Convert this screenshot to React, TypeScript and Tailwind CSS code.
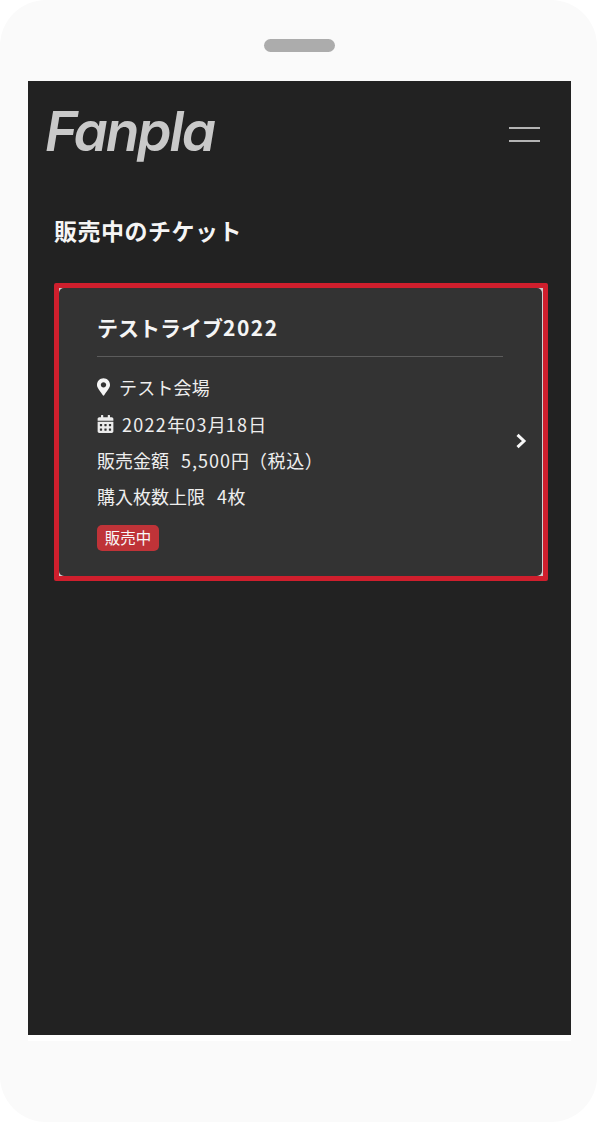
const jp = "font-['Noto_Sans_CJK_JP','Noto_Sans',sans-serif]";

function Pin() {
  return (
    <svg width="13" height="18" viewBox="0 0 384 512" fill="#f5f5f5" className="shrink-0">
      <path d="M172.3 501.7C27 291 0 269.4 0 192 0 86 86 0 192 0s192 86 192 192c0 77.4-27 99-172.3 309.7-9.500 13.800-29.900 13.800-39.400 0zM192 272c44.200 0 80-35.800 80-80s-35.800-80-80-80-80 35.800-80 80 35.800 80 80 80z" />
    </svg>
  );
}

function Calendar() {
  return (
    <svg width="17" height="18" viewBox="0 0 448 512" fill="#ececec" className="shrink-0">
      <path d="M0 464c0 26.500 21.500 48 48 48h352c26.500 0 48-21.500 48-48V192H0v272zm320-196c0-6.600 5.400-12 12-12h40c6.600 0 12 5.400 12 12v40c0 6.600-5.400 12-12 12h-40c-6.600 0-12-5.400-12-12v-40zm0 128c0-6.600 5.400-12 12-12h40c6.600 0 12 5.400 12 12v40c0 6.600-5.400 12-12 12h-40c-6.600 0-12-5.400-12-12v-40zM192 268c0-6.600 5.400-12 12-12h40c6.600 0 12 5.400 12 12v40c0 6.600-5.400 12-12 12h-40c-6.600 0-12-5.400-12-12v-40zm0 128c0-6.600 5.400-12 12-12h40c6.600 0 12 5.400 12 12v40c0 6.600-5.400 12-12 12h-40c-6.600 0-12-5.400-12-12v-40zM64 268c0-6.600 5.400-12 12-12h40c6.600 0 12 5.400 12 12v40c0 6.600-5.400 12-12 12H76c-6.600 0-12-5.400-12-12v-40zm0 128c0-6.600 5.400-12 12-12h40c6.600 0 12 5.400 12 12v40c0 6.600-5.400 12-12 12H76c-6.600 0-12-5.400-12-12v-40zM400 64h-48V16c0-8.800-7.200-16-16-16h-32c-8.800 0-16 7.200-16 16v48H160V16c0-8.800-7.200-16-16-16h-32c-8.800 0-16 7.200-16 16v48H48C21.500 64 0 85.500 0 112v48h448v-48c0-26.500-21.500-48-48-48z" />
    </svg>
  );
}

function Chevron() {
  return (
    <svg width="12" height="16" viewBox="0 0 12 16" fill="none" stroke="#f8f8f8" strokeWidth="3" className="shrink-0">
      <path d="M2.500 1.800 L9 8 L2.500 14.200" />
    </svg>
  );
}

export default function App() {
  return (
    <div className={`h-[1125px] w-[599px] bg-white ${jp}`}>
      <div className="flex h-[1122px] w-[597px] flex-col rounded-[46px] bg-[#fafafa] pl-[28px] pt-[39px]">
        <div className="ml-[236px] h-[13px] w-[71px] rounded-[7px] bg-[#acacac]" />
        <main className="mt-[29px] flex h-[954px] w-[543px] flex-col bg-[#222222] pl-[26px] pr-[23px]">
          <header className="flex h-[99px] items-start justify-between">
            <span className="ml-[-9px] mt-[15px] font-['Inter',sans-serif] text-[55px] font-semibold italic leading-[70px] tracking-[-2.100px] text-[#c9c9c9]">
              Fanpla
            </span>
            <div className="mr-[8px] mt-[46px] flex w-[31px] flex-col gap-[11px]">
              <div className="h-[2px] bg-[#b4b4b4]" />
              <div className="h-[2px] bg-[#b4b4b4]" />
            </div>
          </header>
          <h1 className="mt-[33px] text-[23px] font-bold leading-[34px] tracking-[0.500px] text-[#f5f5f5]">販売中のチケット</h1>
          <section className="mt-[36px] h-[298px] w-[494px] rounded-[2px] border-[5px] border-[#cf1f2d] bg-[#cfcfcf]">
            <div className="flex h-[288px] w-[483px] items-start rounded-[5px] bg-[#333333] pl-[38px]">
              <div className="w-[406px] shrink-0 pt-[23px]">
                <h2 className="border-b border-[#5c5c5c] pb-[12px] text-[21px] font-bold leading-[33px] text-[#f5f5f5]">
                  テストライブ<span className="tracking-[1.500px]">2022</span>
                </h2>
                <div className="mt-[11px] flex h-[38px] items-center gap-[9px] text-[18px] text-[#eeeeee]">
                  <Pin />
                  <span className="tracking-[0.200px]">テスト会場</span>
                </div>
                <div className="flex h-[36px] items-center gap-[8px] text-[18px] text-[#eeeeee]">
                  <Calendar />
                  <span>
                    <span className="tracking-[1.300px]">2022</span>年<span className="tracking-[1.300px]">03</span>月<span className="tracking-[1.300px]">18</span>日
                  </span>
                </div>
                <div className="flex h-[36px] items-center text-[18px] text-[#eeeeee]">
                  <span>販売金額</span>
                  <span className="ml-[12px]">
                    <span className="tracking-[1px]">5,500</span>円<span className="tracking-[0.600px]">（税込）</span>
                  </span>
                </div>
                <div className="flex h-[37px] items-center text-[18px] text-[#eeeeee]">
                  <span>購入枚数上限</span>
                  <span className="ml-[12px] tracking-[0.500px]">4枚</span>
                </div>
                <div className="mt-[10px] flex h-[26px] w-[62px] items-center justify-center rounded-[5px] bg-[#bf3338] text-[15.500px] text-[#f8f8f8]">
                  販売中
                </div>
              </div>
              <div className="ml-[12px] mt-[145px]">
                <Chevron />
              </div>
            </div>
          </section>
        </main>
        <div className="h-[6px] w-[543px] bg-white" />
      </div>
    </div>
  );
}
